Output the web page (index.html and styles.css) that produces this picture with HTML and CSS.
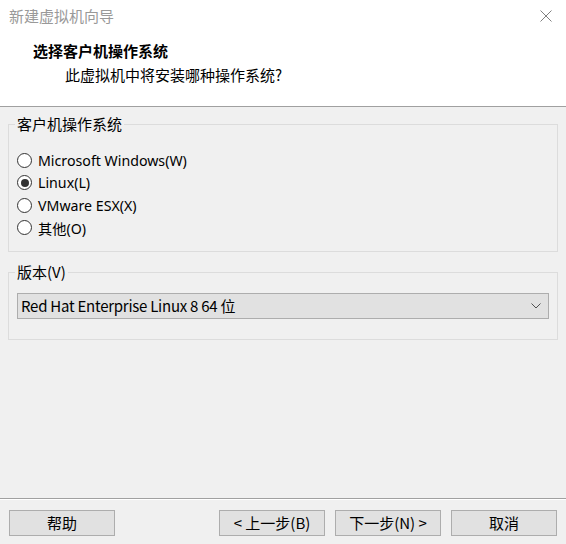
FILE: index.html
```html
<!DOCTYPE html>
<html lang="zh-CN">
<head>
<meta charset="utf-8">
<title>新建虚拟机向导</title>
<link rel="stylesheet" href="styles.css">
</head>
<body>
<div class="window">
  <div class="header">
    <div class="titlebar">
      <span class="title">新建虚拟机向导</span>
      <svg class="close" width="12" height="12" viewBox="0 0 12 12"><path d="M0.5 0.5 L11.5 11.5 M11.5 0.5 L0.5 11.5" stroke="#808080" stroke-width="1" fill="none"/></svg>
    </div>
    <div class="heading">选择客户机操作系统</div>
    <div class="sub">此虚拟机中将安装哪种操作系统?</div>
  </div>

  <div class="content">
    <fieldset class="group os">
      <legend>客户机操作系统</legend>
      <label class="radio"><span class="circle"></span>Microsoft Windows(W)</label>
      <label class="radio"><span class="circle checked"></span>Linux(L)</label>
      <label class="radio"><span class="circle"></span>VMware ESX(X)</label>
      <label class="radio"><span class="circle"></span>其他(O)</label>
    </fieldset>

    <fieldset class="group version">
      <legend>版本(V)</legend>
      <div class="combo">
        <span class="combo-text">Red Hat Enterprise Linux 8 64 位</span>
        <svg class="chev" width="10" height="6" viewBox="0 0 10 6"><path d="M0.5 0.5 L5 5 L9.5 0.5" stroke="#505050" stroke-width="1" fill="none"/></svg>
      </div>
    </fieldset>
  </div>

  <div class="footer">
    <div class="buttons">
      <button class="btn">帮助</button>
      <div class="spacer"></div>
      <button class="btn">&lt; 上一步(B)</button>
      <button class="btn">下一步(N) &gt;</button>
      <button class="btn">取消</button>
    </div>
  </div>
</div>
</body>
</html>
```

FILE: styles.css
```css
html, body {
  margin: 0;
  padding: 0;
}
body {
  width: 566px;
  height: 544px;
  overflow: hidden;
  background: #f0f0f0;
  font-family: "Noto Sans", "Noto Sans CJK SC", sans-serif;
  font-size: 15px;
  color: #000;
}
.window {
  display: flex;
  flex-direction: column;
  height: 544px;
}
.header {
  background: #fff;
  height: 106px;
  border-bottom: 1px solid #a0a0a0;
}
.titlebar {
  height: 32px;
  display: flex;
  align-items: center;
  justify-content: space-between;
  padding: 0 14px 0 9px;
}
.title {
  color: #999;
  font-family: "Noto Sans CJK SC", sans-serif;
  font-size: 15px;
  line-height: 20px;
}
.heading {
  margin: 9px 0 0 33px;
  font-family: "Noto Sans CJK SC", sans-serif;
  font-weight: bold;
  line-height: 20px;
}
.sub {
  margin: 4px 0 0 65px;
  font-family: "Noto Sans CJK SC", sans-serif;
  line-height: 20px;
}
.content {
  padding: 7px 8px 0 8px;
}
.group {
  margin: 0;
  border: 1px solid #dcdcdc;
  padding: 0 8px 0 6px;
}
.group legend {
  padding: 0 2px;
  line-height: 20px;
  font-family: "Noto Sans CJK SC", sans-serif;
}
.os {
  padding-top: 15px;
  padding-bottom: 12px;
}
.version {
  margin-top: 10px;
  padding: 11px 8px 20px 8px;
}
.version legend {
  margin-left: -2px;
}
.radio {
  display: flex;
  align-items: center;
  height: 22.5px;
  padding-left: 2px;
  font-size: 14.2px;
}
.circle {
  width: 13px;
  height: 13px;
  border: 1px solid #333;
  border-radius: 50%;
  background: #fff;
  margin-right: 6px;
  display: flex;
  align-items: center;
  justify-content: center;
  flex: none;
}
.circle.checked::after {
  content: "";
  width: 8px;
  height: 8px;
  border-radius: 50%;
  background: #333;
}
.combo {
  height: 24px;
  border: 1px solid #adadad;
  background: #e1e1e1;
  display: flex;
  align-items: center;
  justify-content: space-between;
  padding: 0 7px 0 3px;
}
.combo-text {
  font-family: "Noto Sans CJK SC", sans-serif;
  line-height: 20px;
  letter-spacing: -0.25px;
}
.footer {
  margin-top: auto;
  border-top: 1px solid #a0a0a0;
}
.buttons {
  border-top: 1px solid #fff;
  display: flex;
  gap: 10px;
  padding: 10px 9px 8px 9px;
}
.spacer {
  flex: 1;
}
.btn {
  width: 106px;
  height: 26px;
  border: 1px solid #adadad;
  background: #e1e1e1;
  font-family: "Noto Sans CJK SC", sans-serif;
  font-size: 15px;
  line-height: 20px;
  color: #000;
  padding: 0;
  margin: 0;
}
```
